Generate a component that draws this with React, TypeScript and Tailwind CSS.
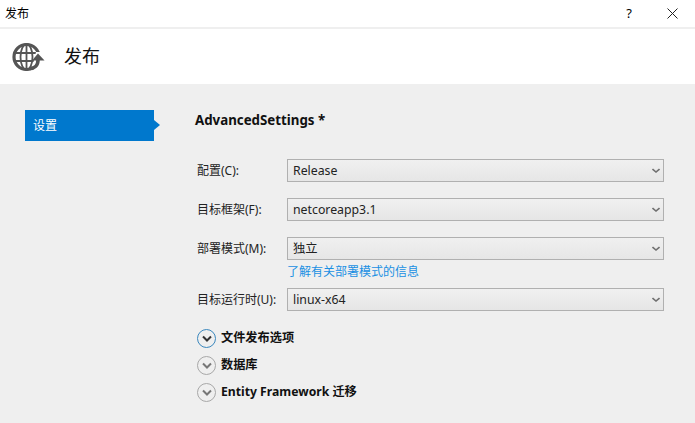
const font = { fontFamily: '"Noto Sans", "Noto Sans CJK SC", sans-serif' }

function PublishIcon() {
  return (
    <svg width="34" height="30" viewBox="0 0 34 30" fill="none" stroke="#555" strokeWidth="1.800">
      <circle cx="14.500" cy="15" r="12.500" strokeWidth="3.200" />
      <ellipse cx="14.500" cy="15" rx="6" ry="13" />
      <path d="M2 11h25M2 19h25" />
      <path d="M14.500 2v26" />
      <path d="M24 10h10v20H19z" fill="#fff" stroke="none" />
      <path d="M18 26.500c4.500 0 8-3 8-8.500" strokeWidth="3.600" />
      <path d="M20 18.500l6-7 6.500 7z" fill="#555" stroke="none" />
    </svg>
  )
}

function Field({ label, value, link }: { label: string; value: string; link?: string }) {
  return (
    <div className="flex flex-col">
      <div className="flex items-center">
        <label className="w-[90px] text-[12px] text-[#222]">{label}</label>
        <div className="flex h-[23px] w-[377px] items-center justify-between border-[1.500px] border-[#b0b0b0] bg-gradient-to-b from-[#f0f0f0] to-[#e6e6e6] pl-[5px] pr-[3px] text-[12.300px] text-[#222]">
          <span className="pt-[1px]">{value}</span>
          <svg width="8" height="6" viewBox="0 0 8 6" fill="none" stroke="#707070" strokeWidth="1.600">
            <path d="M0.500 1l3.500 3 3.500-3" />
          </svg>
        </div>
      </div>
      {link && <a className="ml-[90px] mt-[4px] h-[15px] text-[12px] leading-[16px] text-[#1a8fe3]">{link}</a>}
    </div>
  )
}

function Expander({ label, active }: { label: string; active?: boolean }) {
  return (
    <div className="flex h-[27px] items-center gap-[5px]">
      <div className={`flex h-[19px] w-[19px] items-center justify-center rounded-full border ${active ? 'border-[#3a87bd]' : 'border-[#a8a8a8]'}`}>
        <svg width="10" height="8" viewBox="0 0 10 8" fill="none" stroke={active ? '#333' : '#777'} strokeWidth="2">
          <path d="M1 1.500l4 4 4-4" />
        </svg>
      </div>
      <span className="text-[12.200px] font-bold text-[#111]">{label}</span>
    </div>
  )
}

export default function App() {
  return (
    <div className="flex h-[423px] w-[695px] flex-col overflow-hidden bg-[#efefef]" style={font}>
      <div className="flex h-[27px] items-center justify-between bg-white pl-[5px] text-[12px] text-black">
        <span>发布</span>
        <div className="flex items-center">
          <span className="w-[40px] text-center text-[13px]">?</span>
          <div className="flex w-[46px] justify-center">
            <svg width="11" height="11" viewBox="0 0 11 11" stroke="#222" strokeWidth="1">
              <path d="M0.500 0.500l10 10M10.500 0.500l-10 10" />
            </svg>
          </div>
        </div>
      </div>
      <div className="mt-[2px] flex h-[55px] items-center gap-[18px] bg-white pl-[12px]">
        <PublishIcon />
        <span className="text-[18px] text-[#111]">发布</span>
      </div>
      <div className="flex flex-1 pl-[25px] pt-[26px]">
        <div className="relative h-[31px] w-[129px] bg-[#0078cd] pl-[8px] text-[12px] leading-[31px] text-white">
          设置
          <div className="absolute left-full top-[10px] h-0 w-0 border-y-[5.500px] border-l-[6px] border-y-transparent border-l-[#0078cd]" />
        </div>
        <div className="ml-[41px] flex flex-col">
          <h1 className="h-[20px] text-[13.300px] font-bold leading-[20px] text-[#111]">AdvancedSettings *</h1>
          <div className="ml-[2px] mt-[29px] flex flex-col">
            <div className="flex flex-col gap-[16px]">
              <Field label="配置(C):" value="Release" />
              <Field label="目标框架(F):" value="netcoreapp3.1" />
            </div>
            <div className="mt-[16px]">
              <Field label="部署模式(M):" value="独立" link="了解有关部署模式的信息" />
            </div>
            <div className="mt-[9px]">
              <Field label="目标运行时(U):" value="linux-x64" />
            </div>
            <div className="mt-[14px] flex flex-col">
              <Expander label="文件发布选项" active />
              <Expander label="数据库" />
              <Expander label="Entity Framework 迁移" />
            </div>
          </div>
        </div>
      </div>
    </div>
  )
}
